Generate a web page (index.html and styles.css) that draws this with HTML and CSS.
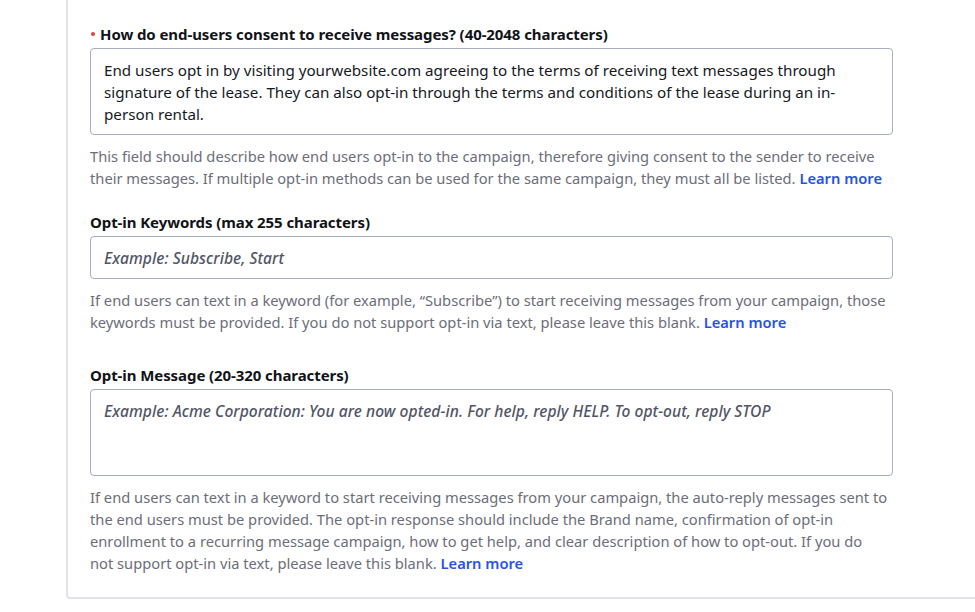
FILE: index.html
```html
<!doctype html>
<html lang="en">

<head>
	<meta charset="utf-8">
	<meta name="viewport" content="width=device-width, initial-scale=1">
	<title>Opt-in details</title>
	<link rel="stylesheet" href="styles.css">
</head>

<body>

	<main class="card">

		<div class="field">
			<label class="field-label field-label--required" for="consent">How do end-users consent to receive messages? (40-2048 characters)</label>
			<textarea class="field-input field-input--area" id="consent">End users opt in by visiting yourwebsite.com agreeing to the terms of receiving text messages through
signature of the lease. They can also opt-in through the terms and conditions of the lease during an in-
person rental.</textarea>
			<p class="field-help">This field should describe how end users opt-in to the campaign, therefore giving consent to the sender to receive<br>their messages. If multiple opt-in methods can be used for the same campaign, they must all be listed. <a class="link" href="#">Learn more</a></p>
		</div>

		<div class="field field--keywords">
			<label class="field-label" for="keywords">Opt-in Keywords (max 255 characters)</label>
			<input class="field-input" id="keywords" type="text" placeholder="Example: Subscribe, Start">
			<p class="field-help">If end users can text in a keyword (for example, “Subscribe”) to start receiving messages from your campaign, those<br>keywords must be provided. If you do not support opt-in via text, please leave this blank. <a class="link" href="#">Learn more</a></p>
		</div>

		<div class="field field--message">
			<label class="field-label" for="message">Opt-in Message (20-320 characters)</label>
			<textarea class="field-input field-input--area" id="message" placeholder="Example: Acme Corporation: You are now opted-in. For help, reply HELP. To opt-out, reply STOP"></textarea>
			<p class="field-help">If end users can text in a keyword to start receiving messages from your campaign, the auto-reply messages sent to<br>the end users must be provided. The opt-in response should include the Brand name, confirmation of opt-in<br>enrollment to a recurring message campaign, how to get help, and clear description of how to opt-out. If you do<br>not support opt-in via text, please leave this blank. <a class="link" href="#">Learn more</a></p>
		</div>

	</main>

</body>
</html>
```

FILE: styles.css
```css
:root {
	--font-family: 'Noto Sans', 'Open Sans', 'Liberation Sans', sans-serif;
	--color: #111318;
	--color-text: #16191f;
	--color-grey: #6b6e7a;
	--color-placeholder: #515567;
	--color-border: #a9adc2;
	--color-card-border: #e1e3e8;
	--color-link: #2853e2;
	--color-required: #e0413f;
}

*,
::after,
::before {
	box-sizing: border-box;
	margin: 0;
	padding: 0;
}

body {
	overflow: hidden;
	color: var(--color);
	font: 400 15px/22px var(--font-family);
	background: #fff;
}

/* карточка формы, верх и правый край уходят за окно */
.card {
	width: 940px;
	margin-left: 66px;
	padding: 23px 22px 23px;
	border: 2px solid var(--color-card-border);
	border-top: 0;
	border-radius: 0 0 4px 4px;
}

.field {
	width: 803px;
}

.field--keywords {
	margin-top: 22px;
}

.field--message {
	margin-top: 31px;
}

.field-label {
	display: block;
	margin-bottom: 3px;
	font-weight: 700;
	letter-spacing: -.08px;
}

.field-label--required::before {
	content: '';
	display: inline-block;
	width: 4px;
	height: 4px;
	margin: 0 5px 3px 1px;
	vertical-align: middle;
	background: var(--color-required);
	border-radius: 50%;
}

.field-input {
	display: block;
	width: 100%;
	height: 43px;
	padding: 10px 13px;
	color: var(--color-text);
	font: inherit;
	font-size: 15.2px;
	background: #fff;
	border: 1px solid var(--color-border);
	border-radius: 4px;
	outline: none;
}

.field-input--area {
	height: 87px;
	resize: none;
	overflow: hidden;
}

.field-input::placeholder {
	color: var(--color-placeholder);
	font-size: 15.6px;
	font-style: italic;
	font-weight: 500;
	letter-spacing: .05px;
	opacity: 1;
}

.field-help {
	margin-top: 10px;
	color: var(--color-grey);
	font-size: 14.7px;
	white-space: nowrap;
}

.link {
	color: var(--color-link);
	font-weight: 600;
	text-decoration: none;
}
```
